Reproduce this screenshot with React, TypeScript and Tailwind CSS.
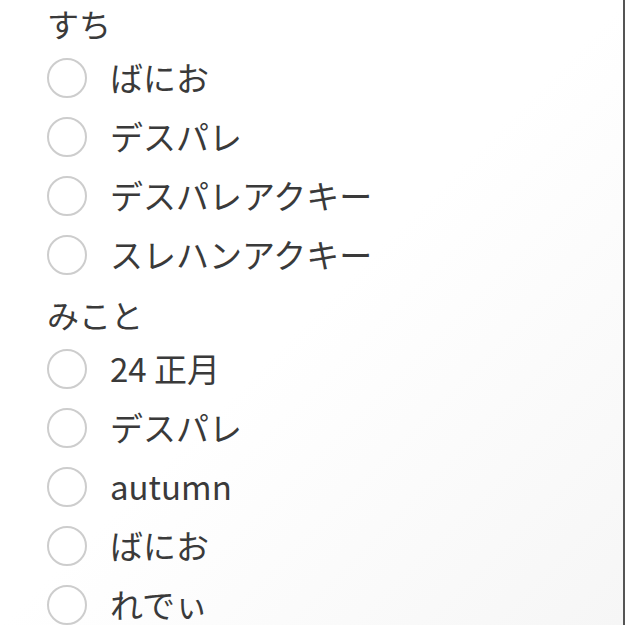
import React from "react";

const groups = [
  { title: "すち", items: ["ばにお", "デスパレ", "デスパレアクキー", "スレハンアクキー"] },
  { title: "みこと", items: ["24 正月", "デスパレ", "autumn", "ばにお", "れでぃ"] },
];

export default function App() {
  return (
    <div
      className="w-[625px] h-[625px] overflow-hidden bg-linear-to-br from-white via-white to-[#f6f6f6] border-r-2 border-[#555] text-[#3a3a3a]"
      style={{ fontFamily: '"Noto Sans CJK JP", "Noto Sans", sans-serif' }}
    >
      <div className="pl-[47px] pt-[3px] flex flex-col">
        {groups.map((g, gi) => (
          <div key={gi} className={gi === 0 ? "flex flex-col" : "flex flex-col mt-[10px]"}>
            <div className="h-10 leading-10 text-[32px] mb-[5px]">{g.title}</div>
            {g.items.map((it, i) => (
              <div key={i} className="h-[59px] flex items-center gap-[23px]">
                <div className="w-10 h-10 rounded-full border-2 border-[#cdcdcd] bg-white shrink-0" />
                <span className="text-[33px] leading-none">{it}</span>
              </div>
            ))}
          </div>
        ))}
      </div>
    </div>
  );
}
